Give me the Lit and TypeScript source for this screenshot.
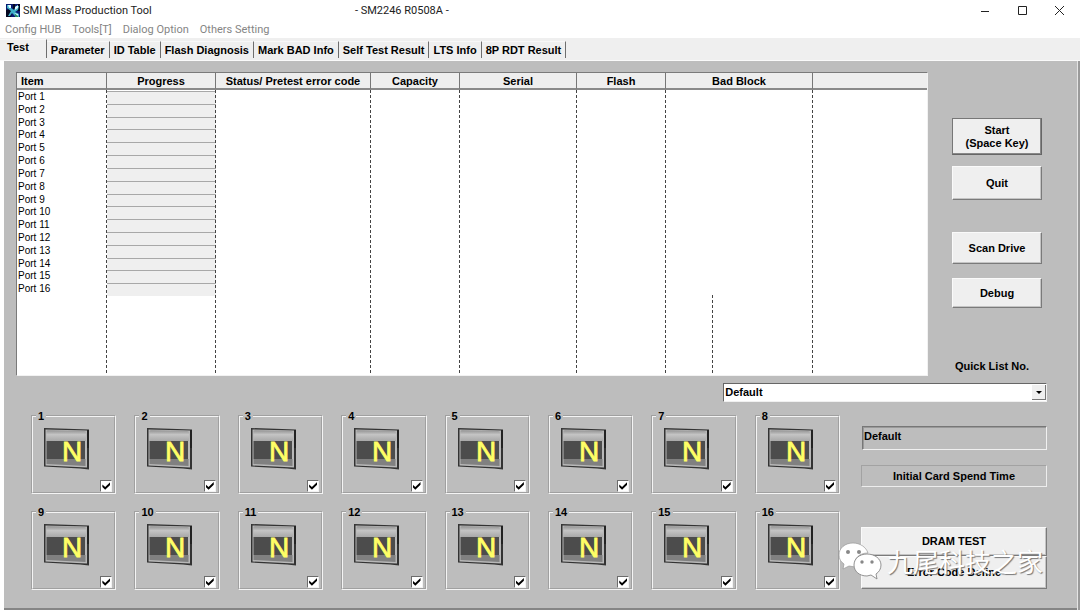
import { LitElement, html, css, svg } from "lit";
import { customElement, property, state } from "lit/decorators.js";

const MENUS = ["Config HUB", "Tools[T]", "Dialog Option", "Others Setting"];
const TABS = ["Test", "Parameter", "ID Table", "Flash Diagnosis", "Mark BAD Info", "Self Test Result", "LTS Info", "8P RDT Result"];
const COLUMNS = ["Item", "Progress", "Status/ Pretest error code", "Capacity", "Serial", "Flash", "Bad Block", ""];
const PORTS = Array.from({ length: 16 }, (_, i) => i + 1);

/** One numbered slot with the state picture and its enable box. */
@customElement("port-slot")
class PortSlot extends LitElement {
  @property({ type: Number }) port = 1;

  static styles = css`
    :host { display: block; min-width: 0; }
    .slot {
      box-sizing: border-box;
      height: 84px;
      margin: 0;
      padding: 0;
      border: 2px groove #f4f4f4;
      min-width: 0;
      font: bold 11px/12px "Liberation Sans", Arial, sans-serif;
    }
    .num { margin-left: 3px; padding: 0 2px; }
    .inner { display: flex; flex-direction: column; justify-content: space-between; height: 70px; }
    .pic { display: block; width: 46px; height: 42px; margin: 6px 0 0 11px; }
    .letter {
      font: 28px "Liberation Sans", Arial, sans-serif;
      fill: #ffff66;
      stroke: #ffff66;
      stroke-width: 0.8px;
    }
    .box {
      appearance: none;
      align-self: flex-end;
      box-sizing: border-box;
      width: 12px;
      height: 12px;
      margin: 0 2px 0 0;
      background: #fff;
      border: 1px solid;
      border-color: #6c6c6c #f2f2f2 #f2f2f2 #6c6c6c;
      display: grid;
      place-items: center;
    }
    .box:checked::after {
      content: "";
      width: 8px;
      height: 8px;
      background: #000;
      clip-path: polygon(0 30%, 35% 62%, 100% 0, 100% 34%, 35% 96%, 0 64%);
    }
  `;

  render() {
    return html`
      <fieldset class="slot">
        <legend class="num">${this.port}</legend>
        <div class="inner">
          <svg class="pic" viewBox="0 0 46 42" aria-hidden="true">
            <defs>
              <linearGradient id="top" x1="0" y1="0" x2="0" y2="1">
                <stop offset="0" stop-color="#929292" />
                <stop offset=".4" stop-color="#c4c4c4" />
                <stop offset="1" stop-color="#a8a8a8" />
              </linearGradient>
            </defs>
            <path d="M0 0 L45 1.500 V41.500 L36 40.500 L0 38.500 Z" fill="#333" />
            <path d="M1.500 1.500 L43 2.500 V39.500 L1.500 37.500 Z" fill="#b8b8b8" />
            <path d="M2.500 3 Q3 2.200 4 2.200 L40 3 Q42 3 42 5 V13 H2.500 Z" fill="url(#top)" />
            <path d="M2.500 13 H41 V31 H2.500 Z" fill="#4c4c4c" />
            <path d="M2.500 31 H41.500 V38 L2.500 36 Z" fill="#808080" />
            <path d="M43 2 H45 V20 H43 Z" fill="#222" />
            <text class="letter" x="18" y="33">N</text>
          </svg>
          <input class="box" type="checkbox" checked aria-label="Enable port ${this.port}" />
        </div>
      </fieldset>
    `;
  }
}

@customElement("app-root")
class AppRoot extends LitElement {
  @state() private tab = 0;

  static styles = css`
    :host {
      display: flex;
      flex-direction: column;
      box-sizing: border-box;
      min-height: 100vh;
      background: #fff;
      color: #000;
      font: bold 11px/13px "Liberation Sans", Arial, sans-serif;
    }
    button, select, input { font: inherit; color: inherit; border-radius: 0; }
    .titlebar {
      display: grid;
      grid-template-columns: 330fr 610fr auto;
      align-items: center;
      height: 22px;
      padding: 0 12px 0 6px;
      font: 11px/16px Roboto, "Noto Sans", sans-serif;
      color: #222;
    }
    .name { display: flex; align-items: center; gap: 3px; }
    .logo { width: 14px; height: 14px; }
    .model { padding-left: 8px; }
    .controls { display: flex; gap: 20px; }
    .ctl { display: block; width: 17px; height: 20px; padding: 0; border: 0; background: none; }
    .ctl svg { display: block; width: 17px; height: 20px; fill: none; stroke: #222; }
    .menubar {
      display: flex;
      gap: 11px;
      height: 16px;
      padding: 0 5px;
    }
    .menu {
      padding: 0;
      border: 0;
      background: none;
      font: 11px/16px Roboto, "Noto Sans", sans-serif;
      color: #858585;
    }
    .tabs {
      display: flex;
      align-items: flex-end;
      height: 23px;
      background: #efefef;
      border-bottom: 1px solid #fafafa;
      box-sizing: border-box;
    }
    .tab {
      box-sizing: border-box;
      height: 17px;
      margin-bottom: 2px;
      padding: 0 4px;
      border: 0;
      border-right: 1px solid #6e6e6e;
      border-top: 1px solid #f8f8f8;
      background: none;
      white-space: nowrap;
    }
    .tab.on { height: 19px; padding: 0 17px 3px 7px; }
    .panel {
      flex: 1;
      display: flex;
      flex-direction: column;
      margin: 0 3px 0 4px;
      padding: 11px 30px 18px 12px;
      background: #bdbdbd;
      border-bottom: 2px solid #858585;
      box-shadow: 1px 0 0 #e4e4e4, 3px 0 0 #9a9a9a;
    }
    .upper { display: flex; gap: 24px; }
    .list {
      flex: 1;
      position: relative;
      box-sizing: border-box;
      height: 304px;
      background: #fff;
      border: 1px solid;
      border-color: #7a7a7a #f2f2f2 #f2f2f2 #7a7a7a;
    }
    .ports { display: block; font-weight: normal; font-size: 10px; }
    .ports thead, .ports tbody { display: grid; }
    .ports tbody { grid-template-rows: repeat(16, 1fr); height: 205px; margin-top: 1px; }
    .line, .rules {
      display: grid;
      grid-template-columns: 90fr 109fr 155fr 89fr 117fr 89fr 147fr 114fr;
    }
    .head {
      box-sizing: border-box;
      height: 17px;
      padding: 0;
      background: #eee;
      border-right: 1px solid #777;
      border-bottom: 2px solid #8a8a8a;
      font: bold 11px/17px "Liberation Sans", Arial, sans-serif;
      white-space: nowrap;
    }
    .head:first-child { text-align: left; padding-left: 4px; }
    .head:last-child { border-right: 0; }
    .port { padding: 0 0 0 1px; line-height: 12px; text-align: left; font-weight: normal; }
    .bar { padding: 0; background: #efefef; border-top: 1px solid #a8a8a8; }
    .rules { position: absolute; inset: 17px 0 0 0; pointer-events: none; }
    .rule, .split { background: repeating-linear-gradient(#444 0 3px, transparent 3px 5px) right / 1px 100% no-repeat; }
    .rule:last-child { background: none; }
    .rule { display: flex; align-items: flex-end; }
    .split { width: 32%; height: 80px; }
    .side {
      width: 95px;
      display: flex;
      flex-direction: column;
      align-items: flex-start;
      padding-top: 46px;
      box-sizing: border-box;
    }
    .btn {
      box-sizing: border-box;
      width: 90px;
      height: 34px;
      padding: 0;
      background: #efefef;
      border: 1px solid;
      border-color: #fafafa #7a7a7a #7a7a7a #fafafa;
      box-shadow: inset -1px -1px 0 #c4c4c4;
      text-align: center;
    }
    .start { height: 37px; border-color: #777 #666 #666 #777; box-shadow: inset -1px -1px 0 #888; margin-bottom: 11px; }
    .scan { height: 32px; margin: 32px 0 14px; }
    .debug { height: 30px; }
    .quick { margin: auto 0 3px 3px; }
    .pick {
      align-self: flex-end;
      display: flex;
      position: relative;
      width: 31.4%;
      height: 19px;
      margin-top: 7px;
    }
    .combo {
      appearance: none;
      box-sizing: border-box;
      width: 100%;
      padding: 0 16px 0 1px;
      background: #fff;
      border: 1px solid;
      border-color: #666 #f0f0f0 #f0f0f0 #666;
    }
    .arrow { position: absolute; right: 1px; top: 2px; width: 14px; height: 15px; pointer-events: none; }
    .lower { display: flex; gap: 21px; margin-top: 8px; padding-left: 15px; }
    .slots {
      flex: 1;
      display: grid;
      grid-template-columns: repeat(8, 1fr);
      gap: 12px 18px;
    }
    .status { width: 186px; display: flex; flex-direction: column; padding-top: 16px; }
    .field {
      box-sizing: border-box;
      width: 185px;
      height: 24px;
      align-self: flex-end;
      padding: 0 0 5px 1px;
      background: #bdbdbd;
      border: 1px solid;
      border-color: #777 #f0f0f0 #f0f0f0 #777;
      box-shadow: inset 1px 1px 0 #999;
    }
    .time {
      box-sizing: border-box;
      height: 22px;
      margin: 15px 0 40px;
      border: 1px solid;
      border-color: #a2a2a2 #ededed #ededed #a2a2a2;
      line-height: 20px;
      text-align: center;
    }
    .actions { position: relative; display: flex; flex-direction: column; }
    .wide { width: 100%; height: 29px; }
    .wide:nth-child(2) { height: 33px; }
    .mark {
      position: absolute;
      left: -23px;
      top: 14px;
      display: flex;
      align-items: center;
      gap: 5px;
      font: 26px/40px "Noto Sans CJK SC", sans-serif;
      color: #fff;
      text-shadow: 1px 1px 1px #777;
      white-space: nowrap;
      pointer-events: none;
    }
    .wechat { width: 44px; height: 40px; }
  `;

  private controlIcon(i: number) {
    return [
      svg`<path d="M4 10.500h8" />`,
      svg`<path d="M4.500 5.500h8v8h-8z" />`,
      svg`<path d="M4 5l9 9M13 5l-9 9" />`,
    ][i];
  }

  render() {
    return html`
      <header class="titlebar">
        <div class="name">
          <svg class="logo" viewBox="0 0 14 14" aria-hidden="true">
            <rect width="14" height="13" fill="#0a1a70" />
            <path d="M7 0h2v5H7zM12 0h2v7h-3zM0 6l4-1 2 3-1 5H0z" fill="#040820" />
            <path d="M1 1h4v3l3 2 2-4 3 0-1 4-3 2 4 2v3h-3L6 9l-2 3H2l3-5-4-3z" fill="#3fb0c8" />
            <path d="M2 1h3v3H3zM9 3l3-2v3l-3 2zM8 9l4 1v2z" fill="#dcfaff" />
            <path d="M9 10l3 2v1H9z" fill="#2c8a5c" />
          </svg>
          <span>SMI Mass Production Tool</span>
        </div>
        <span class="model">- SM2246 R0508A -</span>
        <div class="controls">
          ${["Minimize", "Maximize", "Close"].map(
            (label, i) => html`<button class="ctl" aria-label=${label}><svg viewBox="0 0 17 20">${this.controlIcon(i)}</svg></button>`
          )}
        </div>
      </header>
      <nav class="menubar">${MENUS.map((m) => html`<button class="menu">${m}</button>`)}</nav>
      <div class="tabs" role="tablist">
        ${TABS.map(
          (t, i) => html`<button class="tab ${i === this.tab ? "on" : ""}" role="tab" aria-selected=${i === this.tab} @click=${() => (this.tab = i)}>${t}</button>`
        )}
      </div>
      <main class="panel">
        <section class="upper">
          <div class="list">
            <table class="ports">
              <thead>
                <tr class="line">${COLUMNS.map((c) => html`<th class="head">${c}</th>`)}</tr>
              </thead>
              <tbody>
                ${PORTS.map(
                  (p) => html`<tr class="line"><th class="port" scope="row">Port ${p}</th><td class="bar"></td></tr>`
                )}
              </tbody>
            </table>
            <div class="rules">
              ${COLUMNS.map((c) => html`<div class="rule">${c === "Bad Block" ? html`<div class="split"></div>` : ""}</div>`)}
            </div>
          </div>
          <div class="side">
            <button class="btn start">Start<br />(Space Key)</button>
            <button class="btn">Quit</button>
            <button class="btn scan">Scan Drive</button>
            <button class="btn debug">Debug</button>
            <label class="quick" for="quick">Quick List No.</label>
          </div>
        </section>
        <div class="pick">
          <select class="combo" id="quick"><option>Default</option></select>
          <svg class="arrow" viewBox="0 0 14 15" aria-hidden="true">
            <rect width="14" height="15" fill="#777" />
            <rect width="13" height="14" fill="#efefef" />
            <path d="M4 6h6L7 9z" fill="#000" />
          </svg>
        </div>
        <section class="lower">
          <div class="slots">${PORTS.map((p) => html`<port-slot .port=${p}></port-slot>`)}</div>
          <div class="status">
            <input class="field" aria-label="Current setting" value="Default" readonly />
            <div class="time">Initial Card Spend Time</div>
            <div class="actions">
              <button class="btn wide">DRAM TEST</button>
              <button class="btn wide">Error Code Define</button>
              <div class="mark">
                <svg class="wechat" viewBox="0 0 44 40" aria-hidden="true">
                  <path d="M15 2C7 2 1 7 1 14c0 4 2 7 5 9l-1 5 6-3 6 1c-2-8 4-14 13-14C28 6 22 2 15 2z" fill="#fff" stroke="#999" stroke-width=".7" />
                  <path d="M29 13c-8 0-13 5-13 11s5 11 13 11l4-1 6 4-1-5c3-2 5-5 5-9 0-6-6-11-14-11z" fill="#fff" stroke="#888" stroke-width=".9" />
                  <g fill="#888"><circle cx="10" cy="11" r="2" /><circle cx="21" cy="11" r="2" /><circle cx="24" cy="21" r="1.700" /><circle cx="34" cy="21" r="1.700" /></g>
                </svg>
                <span>九尾科技之家</span>
              </div>
            </div>
          </div>
        </section>
      </main>
    `;
  }
}
